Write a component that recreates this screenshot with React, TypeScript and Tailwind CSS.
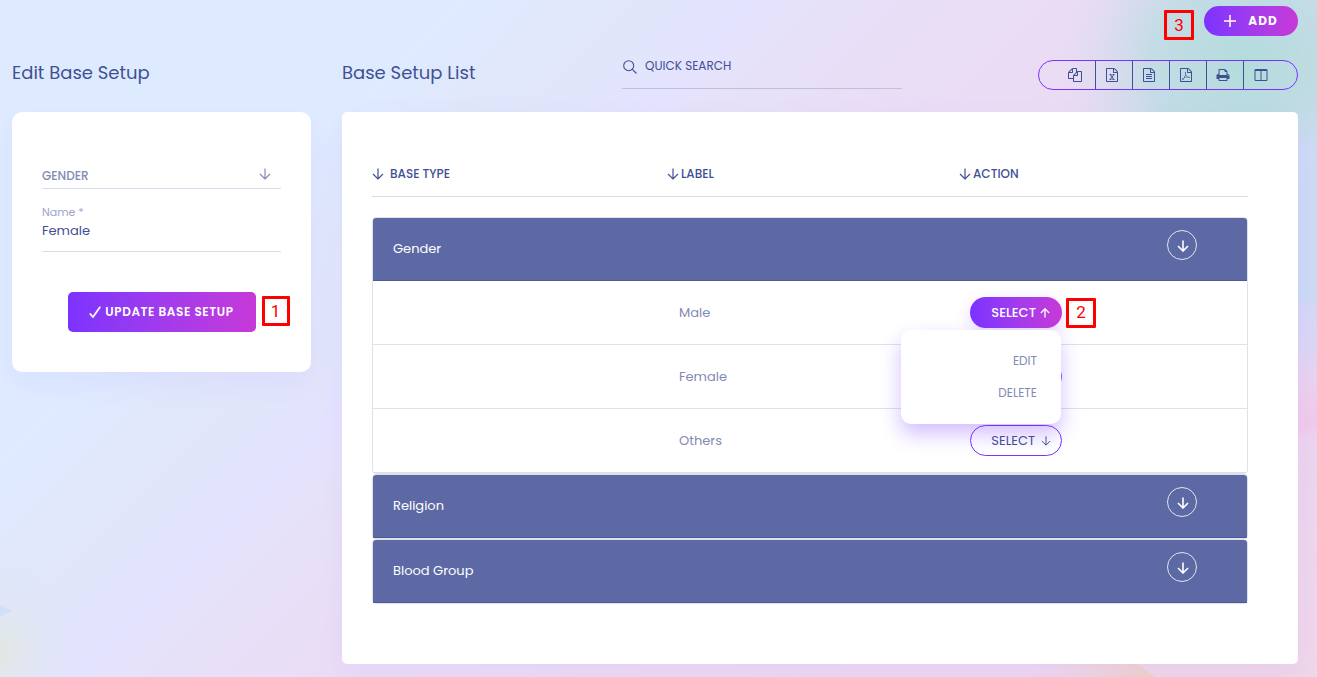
import { useState } from "react";
import type { ReactNode } from "react";

const FILE_BASE =
  "M1596 380q28 28 48 76t20 88v1152q0 40-28 68t-68 28h-1344q-40 0-68-28t-28-68v-1600q0-40 28-68t68-28h896q40 0 88 20t76 48zm-444-244v376h376q-10-29-22-41l-313-313q-12-12-41-22zm384 1528v-1024h-416q-40 0-68-28t-28-68v-416h-768v1536h1280z";

const TOOLS = [
  {
    name: "Copy",
    path: "M1696 384q40 0 68 28t28 68v1216q0 40-28 68t-68 28h-960q-40 0-68-28t-28-68v-288h-544q-40 0-68-28t-28-68v-672q0-40 20-88t48-76l408-408q28-28 76-48t88-20h416q40 0 68 28t28 68v328q68-40 128-40h416zm-544 213l-299 299h299v-299zm-640-384l-299 299h299v-299zm196 647l316-316v-416h-384v416q0 40-28 68t-68 28h-416v640h512v-256q0-40 20-88t48-76zm956 804v-1152h-384v416q0 40-28 68t-68 28h-416v640h896z",
  },
  {
    name: "Excel",
    path:
      FILE_BASE +
      "m-979-234v106h281v-106h-75l103-161q5-7 10-16.5t7.5-13.5 3.5-4h2q1 4 5 10 2 4 4.5 7.5t6 8 6.5 8.5l107 161h-76v106h291v-106h-68l-192-273 195-282h67v-107h-279v107h74l-103 159q-4 7-10 16.5t-9 13.5l-2 3h-2q-1-4-5-10-6-11-17-23l-106-159h76v-107h-290v107h68l189 272-194 283h-68z",
  },
  {
    name: "CSV",
    path:
      FILE_BASE +
      "m-1024-864q0-14 9-23t23-9h704q14 0 23 9t9 23v64q0 14-9 23t-23 9h-704q-14 0-23-9t-9-23v-64zm736 224q14 0 23 9t9 23v64q0 14-9 23t-23 9h-704q-14 0-23-9t-9-23v-64q0-14 9-23t23-9h704zm0 256q14 0 23 9t9 23v64q0 14-9 23t-23 9h-704q-14 0-23-9t-9-23v-64q0-14 9-23t23-9h704z",
  },
  {
    name: "PDF",
    path:
      FILE_BASE +
      "m-514-593q33 26 84 56 59-7 117-7 147 0 177 49 16 22 2 52 0 1-1 2l-2 2v1q-6 38-71 38-48 0-115-20t-130-53q-221 24-392 83-153 262-242 262-15 0-28-7l-24-12q-1-1-6-5-10-10-6-36 9-40 56-91.5t132-96.5q14-9 23 6 2 2 2 4 52-85 107-197 68-136 104-262-24-82-30.5-159.5t6.5-127.5q11-40 42-40h22q23 0 35 15 18 21 9 68-2 6-4 8 1 3 1 8v30q-2 123-14 192 55 164 146 238zm-576 411q52-24 137-158-51 40-87.5 84t-49.5 74zm398-920q-15 42-2 132 1-7 7-44 0-3 7-43 1-4 4-8-1-1-1-2-1-2-1-3-1-22-13-36 0 1-1 2v2zm-124 661q135-54 284-81-2-1-13-9.5t-16-13.5q-76-67-127-176-27 86-83 197-30 56-45 83zm646-16q-24-24-140-24 76 28 124 28 14 0 18-1 0-1-2-3z",
  },
  {
    name: "Print",
    path: "M448 1536h896v-256h-896v256zm0-640h896v-384h-160q-40 0-68-28t-28-68v-160h-640v640zm1152 64q0-26-19-45t-45-19-45 19-19 45 19 45 45 19 45-19 19-45zm128 0v416q0 13-9.5 22.5t-22.5 9.5h-224v160q0 40-28 68t-68 28h-960q-40 0-68-28t-28-68v-160h-224q-13 0-22.5-9.5t-9.5-22.5v-416q0-79 56.5-135.5t135.5-56.5h64v-544q0-40 28-68t68-28h672q40 0 88 20t76 48l152 152q28 28 48 76t20 88v256h64q79 0 135.5 56.5t56.5 135.5z",
  },
  {
    name: "Columns",
    path: "M224 1536h608v-1152h-640v1120q0 13 9.5 22.5t22.5 9.5zm1376-32v-1120h-640v1152h608q13 0 22.5-9.5t9.5-22.5zm128-1216v1216q0 66-47 113t-113 47h-1344q-66 0-113-47t-47-113v-1216q0-66 47-113t113-47h1344q66 0 113 47t47 113z",
  },
];

function Arrow({ up = false, bold = false, className = "size-3" }: { up?: boolean; bold?: boolean; className?: string }) {
  return (
    <svg viewBox="0 0 12 12" className={className + " shrink-0"} fill="none" stroke="currentColor" strokeWidth={bold ? 1.6 : 1.2} aria-hidden="true">
      <path d={up ? "M6 11.5V1M1 6L6 1l5 5" : "M6 0.5V11M1 6l5 5 5-5"} />
    </svg>
  );
}

function Callout({ narrow = false, children }: { narrow?: boolean; children: ReactNode }) {
  return (
    <span
      className={
        (narrow ? "w-7" : "w-[30px]") +
        " flex h-[30px] shrink-0 items-center justify-center rounded-[1px] border-3 border-[#fe0000] font-[Roboto,sans-serif] text-[17px] leading-none text-[#fe0000]"
      }
    >
      {children}
    </span>
  );
}

function Backdrop() {
  return (
    <svg className="absolute inset-0 -z-10 h-full w-full" viewBox="0 0 1317 677" preserveAspectRatio="none" aria-hidden="true">
      <defs>
        <linearGradient id="base" gradientUnits="userSpaceOnUse" x1="150" y1="150" x2="760" y2="760">
          <stop offset="0" stopColor="#deebff" />
          <stop offset="0.12" stopColor="#deebff" />
          <stop offset="0.22" stopColor="#e0e7fb" />
          <stop offset="0.33" stopColor="#e2e5fb" />
          <stop offset="0.37" stopColor="#e4e3ff" />
          <stop offset="0.42" stopColor="#e6e2f9" />
          <stop offset="0.58" stopColor="#eaddf6" />
          <stop offset="1" stopColor="#edd8f1" />
        </linearGradient>
        <radialGradient id="teal">
          <stop offset="0" stopColor="#b2dcdc" />
          <stop offset="0.5" stopColor="#bddce3" stopOpacity="0.85" />
          <stop offset="1" stopColor="#d8dcee" stopOpacity="0" />
        </radialGradient>
        <radialGradient id="olive">
          <stop offset="0" stopColor="#e2e8e3" />
          <stop offset="1" stopColor="#e0e6fa" stopOpacity="0" />
        </radialGradient>
        <linearGradient id="edge" x1="0" y1="0" x2="0" y2="1">
          <stop offset="0" stopColor="#bfdce3" stopOpacity="0" />
          <stop offset="0.1" stopColor="#cddbf5" />
          <stop offset="0.35" stopColor="#cbdaf4" />
          <stop offset="0.37" stopColor="#d5d8f6" />
          <stop offset="0.44" stopColor="#dcd6f5" />
          <stop offset="0.49" stopColor="#ead2ef" />
          <stop offset="0.57" stopColor="#f0caeb" />
          <stop offset="0.6" stopColor="#ecd5ef" />
          <stop offset="1" stopColor="#efd7ea" />
        </linearGradient>
        <linearGradient id="peach" x1="0" y1="0" x2="1" y2="0">
          <stop offset="0" stopColor="#eed5e4" stopOpacity="0" />
          <stop offset="0.6" stopColor="#eed4dc" />
          <stop offset="1" stopColor="#eed1c8" />
        </linearGradient>
      </defs>
      <rect width="1317" height="677" fill="url(#base)" />
      <ellipse cx="1245" cy="65" rx="190" ry="180" fill="url(#teal)" />
      <rect x="1297" y="90" width="20" height="587" fill="url(#edge)" />
      <ellipse cx="0" cy="650" rx="75" ry="90" fill="url(#olive)" />
      <path d="M1133 660h184v17h-162z" fill="#eed7e9" />
      <path d="M1030 660h103l22 17h-125z" fill="url(#peach)" />
      <path d="M0 605l12 6-12 5z" fill="#cfe0fd" />
    </svg>
  );
}

function SelectButton({ open = false, onClick }: { open?: boolean; onClick?: () => void }) {
  return (
    <button
      type="button"
      onClick={onClick}
      aria-expanded={open}
      className={
        open
          ? "flex h-[31px] w-[92px] items-center justify-end gap-1 rounded-full bg-linear-to-r from-[#7c32ff] to-[#c738d8] pr-3 text-[13px] font-medium text-white shadow-[0_5px_15px_rgba(124,50,255,0.2)]"
          : "flex h-[31px] w-[92px] items-center justify-end gap-1.5 rounded-full border border-[#7c32ff] bg-white pr-2.5 text-[13px] text-[#415094]"
      }
    >
      SELECT
      <Arrow up={open} bold={open} className="size-2.5" />
    </button>
  );
}

function GroupHeader({ title }: { title: string }) {
  return (
    <button type="button" className="flex h-[63px] w-full items-start justify-between rounded-t-[3px] border-b border-[#4f5a96] bg-[#5d69a4] pt-3 pr-[50px] pl-5 text-[13px] text-white">
      <span className="pt-2 leading-[22px]">{title}</span>
      <span className="flex size-[30px] items-center justify-center rounded-full border border-[#e3e5f0] pt-px pl-0.5">
        <Arrow bold className="size-3" />
      </span>
    </button>
  );
}

export default function App() {
  const [openRow, setOpenRow] = useState<string | null>("Male");
  const [name, setName] = useState("Female");

  return (
    <main className="relative isolate min-h-screen overflow-hidden px-3 pt-1.5 pr-[19px] pb-[13px] font-['Poppins',Inter,sans-serif] text-[#415094]">
      <Backdrop />

      <div className="flex items-start justify-end gap-2.5">
        <div className="pt-1">
          <Callout>3</Callout>
        </div>
        <button type="button" className="flex h-[30px] w-[94px] items-center justify-center gap-3 rounded-full bg-linear-to-r from-[#7c32ff] to-[#c738d8] text-xs font-bold tracking-[1px] text-white">
          <svg viewBox="0 0 12 12" className="size-3" stroke="currentColor" strokeWidth="1.5" aria-hidden="true">
            <path d="M6 0v12M0 6h12" />
          </svg>
          ADD
        </button>
      </div>

      <div className="mt-4 flex items-start gap-[31px]">
        <section className="w-[299px] shrink-0">
          <h2 className="flex h-[56px] items-start pt-[3px] text-lg leading-7">Edit Base Setup</h2>
          <form className="rounded-[10px] bg-white px-[30px] pt-[50px] pb-10 shadow-[0_10px_30px_rgba(108,39,255,0.05)]" onSubmit={(e) => e.preventDefault()}>
            <div className="relative">
              <select aria-label="Base type" className="h-[27px] w-full appearance-none border-b border-[#dadbec] bg-transparent pt-0.5 text-xs font-medium text-[#828bb2] outline-none">
                <option>GENDER</option>
                <option>RELIGION</option>
                <option>BLOOD GROUP</option>
              </select>
              <span className="pointer-events-none absolute top-1.5 right-2.5 text-[#828bb2]">
                <Arrow className="size-3" />
              </span>
            </div>
            <div className="mt-3.5 border-b border-[#dadbec] pb-2.5">
              <label htmlFor="name" className="block text-[11px] leading-[18px] text-[#a0a6c8]">
                Name *
              </label>
              <input id="name" value={name} onChange={(e) => setName(e.target.value)} className="block h-5 w-full bg-transparent text-[13px] text-[#415094] outline-none" />
            </div>
            <div className="mt-10 flex justify-center">
              <div className="relative">
                <button type="submit" className="flex h-10 w-[188px] items-center justify-center gap-1 rounded-[5px] bg-linear-to-r from-[#7c32ff] to-[#c738d8] text-xs font-semibold tracking-wider whitespace-nowrap text-white">
                  <svg viewBox="0 0 12 12" className="size-3" fill="none" stroke="currentColor" strokeWidth="1.8" aria-hidden="true">
                    <path d="M0.8 7.5L4 11 11.2 0.8" />
                  </svg>
                  UPDATE BASE SETUP
                </button>
                <span className="absolute top-1 left-full ml-1.5">
                  <Callout narrow>1</Callout>
                </span>
              </div>
            </div>
          </form>
        </section>

        <section className="min-w-0 flex-1">
          <div className="flex h-[56px] items-start">
            <h2 className="w-[280px] shrink-0 pt-[3px] text-lg leading-7">Base Setup List</h2>
            <label className="flex h-[33px] w-[280px] items-start gap-2 border-b border-[#bcc1e0] text-xs">
              <svg viewBox="0 0 14 14" className="mt-1 ml-px size-3.5" fill="none" stroke="currentColor" strokeWidth="1.1" aria-hidden="true">
                <circle cx="5.7" cy="5.7" r="5" />
                <path d="M9.3 9.3l4.2 4.2" />
              </svg>
              <input type="search" aria-label="Quick search" placeholder="QUICK SEARCH" className="h-5 min-w-0 flex-1 bg-transparent outline-none placeholder:text-[#415094]" />
            </label>
            <div className="flex flex-1 justify-end pt-1">
              <div className="flex h-[30px] divide-x divide-[#415094] rounded-full border border-[#7c32ff] pr-4 pl-5">
                {TOOLS.map((tool) => (
                  <button key={tool.name} type="button" aria-label={tool.name} className="flex w-[37px] items-center justify-center pr-1">
                    <svg viewBox="0 0 1792 1792" className="size-3.5" fill="currentColor" aria-hidden="true">
                      <path d={tool.path} />
                    </svg>
                  </button>
                ))}
              </div>
            </div>
          </div>

          <div className="rounded-[5px] bg-white px-[30px] pt-[50px] pr-[50px] pb-[60px] shadow-[0_10px_30px_rgba(108,39,255,0.05)]">
            <div className="grid grid-cols-[295fr_292fr_289fr] border-b border-[#dadbec] pb-2.5 text-xs leading-6 font-medium">
              <span className="flex items-center gap-1.5">
                <Arrow />
                BASE TYPE
              </span>
              <span className="flex items-center gap-0.5">
                <Arrow />
                LABEL
              </span>
              <span className="flex items-center gap-0.5">
                <Arrow />
                ACTION
              </span>
            </div>

            <div className="mt-5 flex flex-col">
              <div className="rounded-[4px] border border-[#dee2e6]">
                <GroupHeader title="Gender" />
                {["Male", "Female", "Others"].map((label) => (
                  <div key={label} className="grid h-16 grid-cols-[306fr_291fr_277fr] items-center border-b border-[#dee2e6] text-[13px] text-[#828bb2]">
                    <span />
                    <span>{label}</span>
                    <div className="relative flex items-center gap-1">
                      <SelectButton open={openRow === label} onClick={() => setOpenRow(openRow === label ? null : label)} />
                      {label === "Male" && <Callout>2</Callout>}
                      {openRow === label && (
                        <div className="absolute top-full left-[-69px] z-10 mt-0.5 flex h-[94px] w-40 flex-col items-end rounded-[10px] bg-white pt-[15px] pr-6 text-xs leading-8 shadow-[0_10px_20px_rgba(108,39,255,0.3)]">
                          <a href="#edit">EDIT</a>
                          <a href="#delete">DELETE</a>
                        </div>
                      )}
                    </div>
                  </div>
                ))}
              </div>
              {["Religion", "Blood Group"].map((title) => (
                <div key={title} className="rounded-[4px] border border-[#dee2e6]">
                  <GroupHeader title={title} />
                </div>
              ))}
            </div>
          </div>
        </section>
      </div>
    </main>
  );
}
